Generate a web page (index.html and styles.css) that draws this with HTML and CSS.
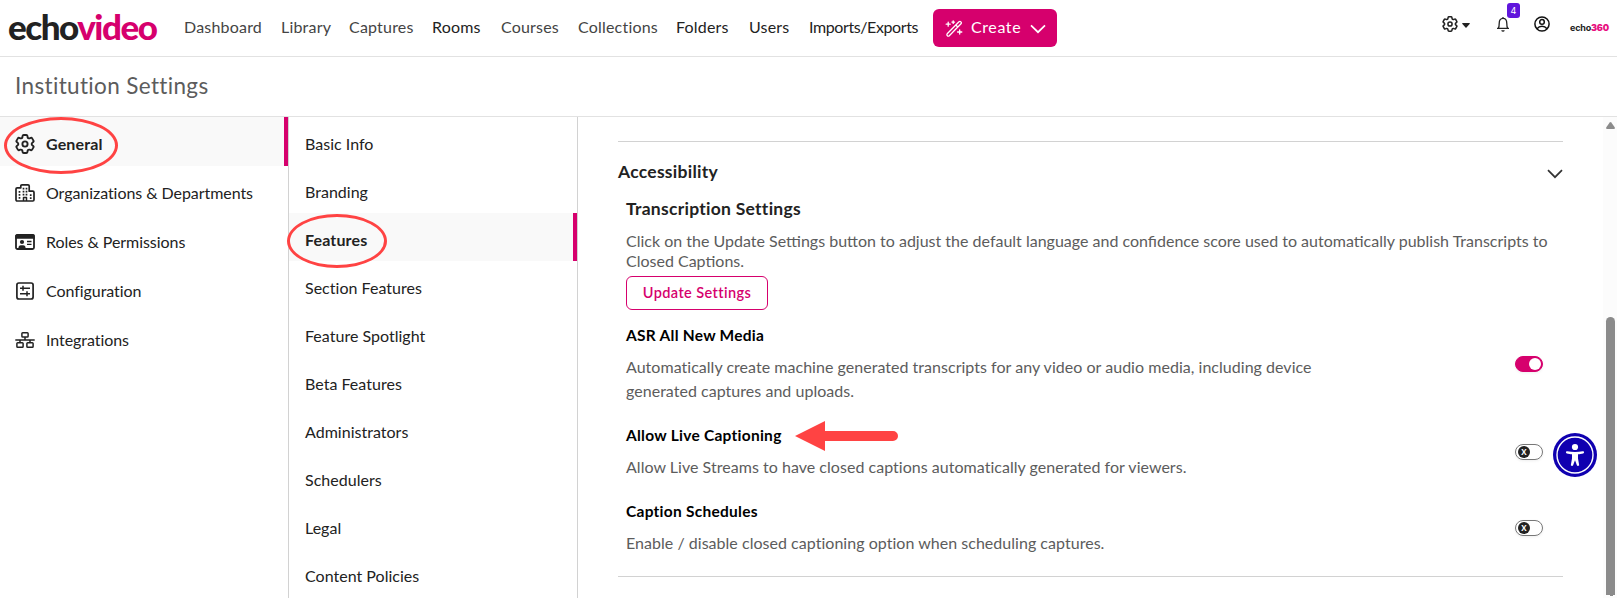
FILE: index.html
```html
<!DOCTYPE html>
<html lang="en">
<head>
<meta charset="utf-8">
<title>Institution Settings</title>
<link rel="stylesheet" href="styles.css">
</head>
<body>
<svg width="0" height="0" class="defs">
  <symbol id="gear" viewBox="2 2 20 20"><path d="M9.594 3.94c.09-.542.56-.94 1.11-.94h2.593c.55 0 1.02.398 1.11.94l.213 1.281c.063.374.313.686.645.87.074.04.147.083.22.127.325.196.72.257 1.075.124l1.217-.456a1.125 1.125 0 0 1 1.37.49l1.296 2.247a1.125 1.125 0 0 1-.26 1.431l-1.003.827c-.293.241-.438.613-.43.992a7.723 7.723 0 0 1 0 .255c-.008.378.137.75.43.991l1.004.827c.424.35.534.955.26 1.43l-1.298 2.247a1.125 1.125 0 0 1-1.369.491l-1.217-.456c-.355-.133-.75-.072-1.076.124a6.47 6.47 0 0 1-.22.128c-.331.183-.581.495-.644.869l-.213 1.281c-.09.543-.56.94-1.11.94h-2.594c-.55 0-1.019-.398-1.11-.94l-.213-1.281c-.062-.374-.312-.686-.644-.87a6.52 6.52 0 0 1-.22-.127c-.325-.196-.72-.257-1.076-.124l-1.217.456a1.125 1.125 0 0 1-1.369-.49l-1.297-2.247a1.125 1.125 0 0 1 .26-1.431l1.004-.827c.292-.24.437-.613.43-.991a6.932 6.932 0 0 1 0-.255c.007-.38-.138-.751-.43-.992l-1.004-.827a1.125 1.125 0 0 1-.26-1.43l1.297-2.247a1.125 1.125 0 0 1 1.37-.491l1.216.456c.356.133.751.072 1.076-.124.072-.044.146-.086.22-.128.332-.183.582-.495.644-.869l.214-1.28Z"/><circle cx="12" cy="12" r="2.6"/></symbol>
</svg>
<header class="topbar">
  <div class="logo"><span>echo</span><b>video</b></div>
  <nav class="nav">
    <a class="soft">Dashboard</a><a class="soft">Library</a><a class="soft">Captures</a><a>Rooms</a><a class="soft">Courses</a><a class="soft">Collections</a><a>Folders</a><a>Users</a><a class="tight">Imports/Exports</a>
  </nav>
  <button class="create">
    <svg width="18" height="17" viewBox="0 0 18 17" fill="none" stroke="#fff" stroke-width="1.3" stroke-linejoin="round" stroke-linecap="round"><path d="M2.2 13.8 14 1.8q1-.8 1.900 .1t.1 1.900L4.300 15.700q-1 .8-1.900 0t-.2-1.900ZM10.800 5l2 2"/><path d="M3.200 2.200v4M1.200 4.200h4M8.200.8v2.600M6.900 2.100h2.600M14.700 9.900v4.200M12.600 12h4.200"/></svg>
    <span>Create</span>
    <svg class="chev" width="16" height="10" viewBox="0 0 16 10" fill="none" stroke="#fff" stroke-width="1.7"><path d="M1 1.300 8 8.200 15 1.300"/></svg>
  </button>
  <div class="tools">
    <svg class="t-gear" width="16" height="16" fill="none" stroke="#222" stroke-width="1.900"><use href="#gear"/></svg>
    <svg class="t-caret" width="8" height="5" viewBox="0 0 8 5"><path d="M.6 0h6.800q.8.400.2 1L4.500 4.500q-.5.500-1 0L.4 1Q-.2.400.6 0Z" fill="#222"/></svg>
    <div class="bell">
      <svg width="14" height="16" viewBox="0 0 14 16" fill="none" stroke="#222" stroke-width="1.300" stroke-linejoin="round"><path d="M7 1v1.300M1 12.300h12M2.300 12.300c.8-1 .9-2.500.9-4.800C3.200 4.200 4.600 2.400 7 2.400s3.800 1.800 3.800 5.100c0 2.300.1 3.800.9 4.800"/><path d="M5.200 14.200h3.600q-.4 1.500-1.800 1.500t-1.800-1.500Z" fill="#222" stroke="none"/></svg>
      <span class="badge">4</span>
    </div>
    <svg class="user" width="16" height="16" viewBox="0 0 16 16" fill="none" stroke="#111" stroke-width="1.500"><circle cx="8" cy="8" r="7.100"/><circle cx="8" cy="5.900" r="2.300"/><path d="M3 12.800Q5 10.300 8 10.300t5 2.500"/></svg>
    <div class="brand">echo<b>360</b></div>
  </div>
</header>
<div class="subbar"><h1>Institution Settings</h1></div>
<div class="body">
  <aside class="side">
    <a class="on"><svg width="20" height="20" fill="none" stroke="#222" stroke-width="1.900"><use href="#gear"/></svg><span>General</span></a>
    <a><svg width="20" height="20" viewBox="0 0 20 20" fill="none" stroke="#222" stroke-width="1.700" stroke-linejoin="round"><path d="M5.800 4.800V3q0-1.200 1.200-1.200h6Q14.200 1.800 14.200 3v5.200h3.600q1.200 0 1.200 1.200v7.400q0 1.200-1.200 1.200H2.200Q1 18 1 16.800V6Q1 4.800 2.200 4.800Z"/><path d="M8.500 18v-3.500h3V18" stroke-width="1.500"/><path d="M4.500 8v8M8.500 4.800v8M11.500 4.800v8M15.700 11.300v5" stroke-dasharray="1.800 1.200"/></svg><span>Organizations &amp; Departments</span></a>
    <a><svg width="20" height="20" viewBox="0 0 20 20"><rect x="1" y="3" width="18" height="14" rx="1.500" fill="none" stroke="#222" stroke-width="1.800"/><path d="M.3 3.500q.4-1.300 1.700-1.300h16q1.300 0 1.700 1.300v3.300H.3Z" fill="#222"/><circle cx="7" cy="10" r="2.100" fill="#222"/><path d="M3.400 16.500q0-3.300 2.500-3.300h2.200q2.500 0 2.500 3.300Z" fill="#222"/><path d="M12 9.500h4.500M12 12.300h4.500" stroke="#222" stroke-width="1.300"/></svg><span>Roles &amp; Permissions</span></a>
    <a><svg width="20" height="20" viewBox="0 0 20 20" fill="none" stroke="#222" stroke-width="1.700"><rect x="1.900" y="2" width="16.200" height="16" rx="2"/><path d="M5 7.200h10M5 12.800h10" stroke-width="1.500"/><path d="M8 4.700v5M12 10.300v5" stroke-width="1.500"/></svg><span>Configuration</span></a>
    <a><svg width="20" height="20" viewBox="0 0 20 20" fill="none" stroke="#222" stroke-width="1.500"><rect x="6.900" y="2.800" width="6.200" height="4.300" rx=".8"/><rect x="1.900" y="12.700" width="6.200" height="4.600" rx=".8"/><rect x="11.900" y="12.700" width="6.200" height="4.600" rx=".8"/><path d="M.3 9.900h19.400M10 7v3M5 10v2.700M15 10v2.700"/></svg><span>Integrations</span></a>
  </aside>
  <aside class="side sub">
    <a>Basic Info</a><a>Branding</a><a class="on">Features</a><a>Section Features</a><a>Feature Spotlight</a><a>Beta Features</a><a>Administrators</a><a>Schedulers</a><a>Legal</a><a>Content Policies</a>
  </aside>
  <main class="main">
    <section class="panel">
      <div class="panel-head"><h2>Accessibility</h2><svg width="16" height="10" viewBox="0 0 16 10" fill="none" stroke="#333" stroke-width="1.700"><path d="M1 1.200 8 8.200 15 1.200"/></svg></div>
      <div class="content">
        <h3>Transcription Settings</h3>
        <p class="intro">Click on the Update Settings button to adjust the default language and confidence score used to automatically publish Transcripts to<br>Closed Captions.</p>
        <button class="update">Update Settings</button>
        <div class="row asr"><div><h4>ASR All New Media</h4><p>Automatically create machine generated transcripts for any video or audio media, including device<br>generated captures and uploads.</p></div><i class="toggle yes"></i></div>
        <div class="row"><div><h4>Allow Live Captioning</h4><p>Allow Live Streams to have closed captions automatically generated for viewers.</p></div><i class="toggle"><b>X</b></i></div>
        <div class="row"><div><h4>Caption Schedules</h4><p>Enable / disable closed captioning option when scheduling captures.</p></div><i class="toggle"><b>X</b></i></div>
      </div>
    </section>
  </main>
  <div class="scroll"><svg width="9" height="7" viewBox="0 0 9 7"><path d="M3.700.6q.8-1 1.600 0L8.700 5.300Q9.300 7 8 7H1Q-.3 7 .3 5.300Z" fill="#8b8b8b"/></svg><div class="thumb"></div><div class="down"></div></div>
</div>
<div class="a11y"><svg width="44" height="44" viewBox="0 0 44 44"><circle cx="22" cy="22" r="22" fill="#1000b0"/><circle cx="22" cy="22" r="18" fill="none" stroke="#fff" stroke-width="1.400"/><circle cx="22" cy="14" r="3.100" fill="#fff"/><path d="M14 19.300Q22 21 30 19.300" fill="none" stroke="#fff" stroke-width="2.200" stroke-linecap="round"/><path d="M19 19.500h6v6l1.200 6.700q-1.400 1.400-2.300 0L22 27.200l-1.900 5q-.9 1.400-2.300 0l1.200-6.700Z" fill="#fff"/></svg></div>
<div class="ring ring-general"></div>
<div class="ring ring-features"></div>
<svg class="arrow" width="104" height="30" viewBox="0 0 104 30"><path d="M0 15 30 0v10h68a5 5 0 0 1 0 10H30v10Z" fill="#ff4343"/></svg>
</body>
</html>
```
FILE: styles.css
```css
* { box-sizing: border-box; }
body { margin: 0; width: 1617px; height: 598px; overflow: hidden; background: #fff; color: #222; font: 16px/20px Lato, sans-serif; position: relative; }
h1, h2, h3, h4, p { margin: 0; }
button { font-family: inherit; margin: 0; padding: 0; }
.defs { position: absolute; }

.topbar { height: 57px; border-bottom: 1px solid #e2e2e2; display: flex; align-items: flex-start; }
.logo { width: 184px; padding: 7px 0 0 8px; font-size: 35px; line-height: 38px; font-weight: 900; letter-spacing: -1.5px; color: #222; white-space: nowrap; }
.logo b { color: #d6006d; font-weight: 900; }
.nav { width: 749px; padding-top: 17px; display: grid; grid-template-columns: 97px 68px 83px 69px 77px 98px 73px 60px 124px; color: #222; letter-spacing: .2px; white-space: nowrap; }
.nav .soft { color: #444; }
.nav .tight { letter-spacing: -.4px; }
.create { width: 124px; height: 38px; margin-top: 9px; background: #d6006d; border: 0; border-radius: 6px; color: #fff; font-size: 16px; letter-spacing: .6px; display: flex; align-items: center; padding-left: 12px; }
.create span { width: 59px; margin-left: 8px; padding-bottom: 3px; text-align: left; }
.create .chev { margin-top: 2px; }
.tools { display: flex; margin-left: 385px; padding-top: 16px; }
.t-caret { margin: 7px 0 0 4px; }
.bell { position: relative; margin: 0 0 0 26px; width: 14px; }
.badge { position: absolute; left: 11px; top: -13px; width: 13px; height: 15px; border-radius: 3px; background: #6016dc; color: #fff; font: 9px/15px Inter, sans-serif; text-align: center; }
.user { margin-left: 24px; }
.brand { margin-left: 20px; padding-top: 6px; font: 700 9px/12px Inter, sans-serif; letter-spacing: -.2px; white-space: nowrap; }
.brand b { color: #e8107f; }

.subbar { height: 60px; border-bottom: 1px solid #e2e2e2; padding: 15px 15px; }
.subbar h1 { font-size: 22.5px; line-height: 28px; font-weight: 400; color: #5c5c5c; letter-spacing: .35px; }

.body { display: flex; height: 481px; }
.side { width: 289px; flex: none; border-right: 1px solid #d2d2d2; letter-spacing: -.06px; overflow: hidden; }
.side a { display: flex; align-items: center; height: 49px; padding: 5px 0 0 15px; gap: 11px; white-space: nowrap; }
.side a span { margin-top: -1px; }
.side .on { background: #f9f9f9; border-right: 4px solid #d6006d; font-weight: 700; letter-spacing: .15px; }
.sub { letter-spacing: .02px; }
.sub a { height: 48px; padding: 5px 0 0 16px; }

.main { flex: 1; min-width: 0; padding: 24px 40px 0; }
.panel { border-top: 1px solid #d2d2d2; border-bottom: 1px solid #d2d2d2; height: 436px; }
.panel-head { display: flex; justify-content: space-between; height: 56px; padding-top: 19px; }
.panel-head h2, h3 { font-size: 17.500px; line-height: 22px; font-weight: 700; letter-spacing: .27px; }
.panel-head svg { margin-top: 8px; }
.content { padding-left: 8px; }
p { color: #5c5c5c; letter-spacing: .03px; white-space: nowrap; }
.intro { padding-top: 11px; letter-spacing: 0; }
.update { display: block; width: 142px; height: 34px; margin-top: 5px; padding-bottom: 2px; background: #fff; border: 1px solid #d6006d; border-radius: 6px; color: #d6006d; font-size: 14.500px; font-weight: 600; letter-spacing: .4px; }
.row { display: flex; justify-content: space-between; height: 76px; padding-right: 20px; }
.row h4 { font-size: 15.500px; line-height: 22px; font-weight: 700; color: #000; letter-spacing: .26px; }
.row > div { padding-top: 2px; }
.row p { line-height: 24px; margin-top: 9px; }
.asr { margin-top: 12px; height: 100px; }
.toggle { position: relative; width: 28px; height: 16px; margin-top: 22px; border: 1px solid #777; border-radius: 8px; box-shadow: 0 1px 3px #0001; font-style: normal; }
.asr .toggle { margin-top: 34px; }
.toggle b { display: block; width: 12px; height: 12px; margin: 1px 0 0 2px; border-radius: 50%; background: #222; color: #fff; font: 700 8px/12px "Open Sans", sans-serif; text-align: center; }
.yes { background: #d6006d; border-color: #d6006d; }
.yes::after { content: ""; display: block; width: 12px; height: 12px; margin: 1px 0 0 13px; border-radius: 50%; background: #fff; }

.scroll { width: 14px; background: #fcfcfc; padding: 5px 2px 0 3px; display: flex; flex-direction: column; }
.scroll svg, .thumb, .down { flex: none; }
.thumb { width: 9px; height: 278px; margin-top: 188px; background: #8b8b8b; border-radius: 4.500px 4.500px 0 0; }
.down { width: 3px; height: 1px; margin-left: 4px; background: #8b8b8b; }

.a11y { position: absolute; left: 1553px; top: 433px; width: 44px; height: 44px; }
.ring { position: absolute; border: 3px solid #ff4343; border-radius: 50%; }
.ring-general { left: 4px; top: 117px; width: 114px; height: 57px; }
.ring-features { left: 287px; top: 214px; width: 100px; height: 54px; }
.arrow { position: absolute; left: 795px; top: 421px; }
```
